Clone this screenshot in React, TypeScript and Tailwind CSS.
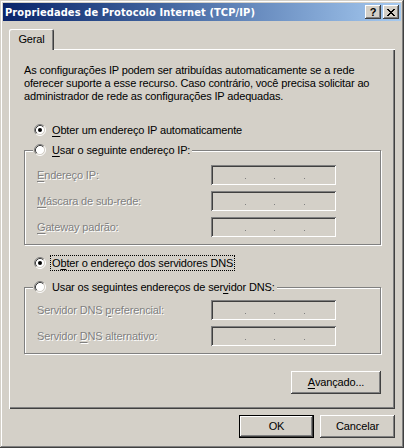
const RAISED =
  'shadow-[inset_-1px_-1px_#404040,inset_1px_1px_#fff,inset_-2px_-2px_#808080,inset_2px_2px_#d4d0c8]';

function Radio({ checked = false }: { checked?: boolean }) {
  return (
    <svg width="12" height="12" viewBox="0 0 12 12" className="shrink-0">
      <circle cx="6" cy="6" r="4.5" fill="#fff" />
      <path d="M2.11 9.89A5.5 5.5 0 0 1 9.89 2.11" fill="none" stroke="#808080" />
      <path d="M9.89 2.11A5.5 5.5 0 0 1 2.11 9.89" fill="none" stroke="#fff" />
      <path d="M2.82 9.18A4.5 4.5 0 0 1 9.18 2.82" fill="none" stroke="#404040" />
      <path d="M9.18 2.82A4.5 4.5 0 0 1 2.82 9.18" fill="none" stroke="#d4d0c8" />
      {checked && <circle cx="6" cy="6" r="2" fill="#000" />}
    </svg>
  );
}

function K({ children }: { children: React.ReactNode }) {
  return <span className="underline decoration-1 underline-offset-[2px]">{children}</span>;
}

function IpBox() {
  return (
    <div className="flex h-[20px] w-[125px] items-end pb-[6px] shadow-[inset_1px_1px_#808080,inset_-1px_-1px_#fff,inset_2px_2px_#404040,inset_-2px_-2px_#d4d0c8]">
      <span className="ml-[34px] h-px w-px bg-[#808080]" />
      <span className="ml-[28px] h-px w-px bg-[#808080]" />
      <span className="ml-[29px] h-px w-px bg-[#808080]" />
    </div>
  );
}

function Field({ children }: { children: React.ReactNode }) {
  return (
    <div className="flex h-[20px] items-center">
      <span className="w-[174px] text-[#808080] [text-shadow:1px_1px_0_#fff]">{children}</span>
      <IpBox />
    </div>
  );
}

function TitleBtn({ children }: { children: React.ReactNode }) {
  return (
    <div className={`flex h-[14px] w-[16px] items-center justify-center bg-[#d4d0c8] ${RAISED}`}>
      {children}
    </div>
  );
}

function CloseGlyph() {
  const px = [
    [0, 0], [1, 0], [6, 0], [7, 0],
    [1, 1], [2, 1], [5, 1], [6, 1],
    [2, 2], [3, 2], [4, 2], [5, 2],
    [3, 3], [4, 3],
    [2, 4], [3, 4], [4, 4], [5, 4],
    [1, 5], [2, 5], [5, 5], [6, 5],
    [0, 6], [1, 6], [6, 6], [7, 6],
  ];
  return (
    <svg width="8" height="7" viewBox="0 0 8 7" shapeRendering="crispEdges">
      {px.map(([x, y]) => (
        <rect key={`${x}-${y}`} x={x} y={y} width="1" height="1" fill="#000" />
      ))}
    </svg>
  );
}

function Button({ children, className = '', isDefault = false }: {
  children: React.ReactNode; className?: string; isDefault?: boolean;
}) {
  const border = isDefault
    ? 'shadow-[inset_0_0_0_1px_#000,inset_-2px_-2px_#404040,inset_2px_2px_#fff,inset_-3px_-3px_#808080]'
    : RAISED;
  return (
    <div className={`flex h-[23px] items-center justify-center ${border} ${className}`}>
      {children}
    </div>
  );
}

export default function App() {
  return (
    <div className="h-[448px] w-[404px] bg-[#d4d0c8] p-[3px] font-['Liberation_Sans',sans-serif] text-[11px] leading-[13px] tracking-[-0.15px] text-black shadow-[inset_-1px_-1px_#404040,inset_1px_1px_#d4d0c8,inset_-2px_-2px_#808080,inset_2px_2px_#fff]">
      {/* title bar */}
      <div className="flex h-[18px] items-center bg-linear-to-r from-[#0a246a] to-[#a6caf0] px-[2px]">
        <span className="flex-1 font-['DejaVu_Sans_Condensed',sans-serif] font-bold tracking-[0.1px] text-white">Propriedades de Protocolo Internet (TCP/IP)</span>
        <TitleBtn>
          <span className="font-bold leading-none">?</span>
        </TitleBtn>
        <div className="ml-[2px]">
          <TitleBtn>
            <CloseGlyph />
          </TitleBtn>
        </div>
      </div>

      <div className="px-[6px] pt-[8px]">
        {/* tab */}
        <div className="relative z-10 -mb-px flex h-[21px] w-[45px] items-center justify-center rounded-t-[2px] bg-[#d4d0c8] shadow-[inset_1px_1px_#fff,inset_-1px_0_#404040,inset_-2px_0_#808080]">
          Geral
        </div>

        {/* tab page */}
        <div className="h-[360px] pl-[15px] pr-[14px] pt-[15px] shadow-[inset_1px_1px_#fff,inset_-1px_-1px_#404040,inset_-2px_-2px_#808080]">
          <p className="whitespace-nowrap">
            As configurações IP podem ser atribuídas automaticamente se a rede<br />
            oferecer suporte a esse recurso. Caso contrário, você precisa solicitar ao<br />
            administrador de rede as configurações IP adequadas.
          </p>

          <div className="ml-[10px] mt-[19px] flex h-[16px] items-center gap-[6px]">
            <Radio checked />
            <span><K>O</K>bter um endereço IP automaticamente</span>
          </div>

          <fieldset className="mt-[4px] w-[357px] border border-[#808080] px-[8px] pb-[7px] pt-[7px] shadow-[inset_1px_1px_#fff,1px_1px_#fff]">
            <legend className="flex h-[16px] items-center gap-[6px] bg-[#d4d0c8] pl-[1px] pr-[2px]">
              <Radio />
              <span><K>U</K>sar o seguinte endereço IP:</span>
            </legend>
            <div className="flex flex-col gap-[6px] pl-[4px]">
              <Field><K>E</K>ndereço IP:</Field>
              <Field><K>M</K>áscara de sub-rede:</Field>
              <Field><K>G</K>ateway padrão:</Field>
            </div>
          </fieldset>

          <div className="ml-[10px] mt-[10px] flex h-[16px] items-center gap-[4px]">
            <Radio checked />
            <span className="flex h-[16px] items-center border border-dotted border-black px-[1px]">
              O<K>b</K>ter o endereço dos servidores DNS
            </span>
          </div>

          <fieldset className="mt-[8px] w-[357px] border border-[#808080] px-[8px] pb-[7px] pt-[5px] shadow-[inset_1px_1px_#fff,1px_1px_#fff]">
            <legend className="flex h-[16px] items-center gap-[6px] bg-[#d4d0c8] pl-[1px] pr-[2px]">
              <Radio />
              <span>Usar os seguintes endereços de ser<K>v</K>idor DNS:</span>
            </legend>
            <div className="flex flex-col gap-[6px] pl-[4px]">
              <Field>Servidor DNS <K>p</K>referencial:</Field>
              <Field>Servidor <K>D</K>NS alternativo:</Field>
            </div>
          </fieldset>

          <div className="mt-[17px] flex w-[357px] justify-end">
            <Button className="w-[90px]"><K>A</K>vançado...</Button>
          </div>
        </div>

        {/* dialog buttons */}
        <div className="mt-[6px] flex justify-end gap-[6px]">
          <Button isDefault className="w-[75px]">OK</Button>
          <Button className="w-[75px]">Cancelar</Button>
        </div>
      </div>
    </div>
  );
}
